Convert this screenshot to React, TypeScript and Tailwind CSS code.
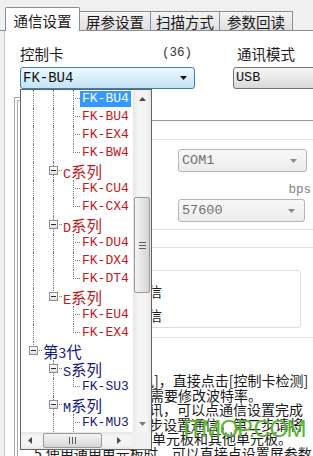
import React from "react";

type Seg = "pass" | "tee" | "ell" | "none";
interface RowDef {
  level: 0 | 1 | 2;
  segs: Seg[];
  text: string;
  tone: "red" | "blue";
  selected?: boolean;
}

const rows: RowDef[] = [
  { level: 2, segs: ["pass", "pass", "tee"], text: "FK-BU4", tone: "red", selected: true },
  { level: 2, segs: ["pass", "pass", "tee"], text: "FK-BU4", tone: "red" },
  { level: 2, segs: ["pass", "pass", "tee"], text: "FK-EX4", tone: "red" },
  { level: 2, segs: ["pass", "pass", "ell"], text: "FK-BW4", tone: "red" },
  { level: 1, segs: ["pass", "tee"], text: "C", tone: "red" },
  { level: 2, segs: ["pass", "pass", "tee"], text: "FK-CU4", tone: "red" },
  { level: 2, segs: ["pass", "pass", "ell"], text: "FK-CX4", tone: "red" },
  { level: 1, segs: ["pass", "tee"], text: "D", tone: "red" },
  { level: 2, segs: ["pass", "pass", "tee"], text: "FK-DU4", tone: "red" },
  { level: 2, segs: ["pass", "pass", "tee"], text: "FK-DX4", tone: "red" },
  { level: 2, segs: ["pass", "pass", "ell"], text: "FK-DT4", tone: "red" },
  { level: 1, segs: ["pass", "ell"], text: "E", tone: "red" },
  { level: 2, segs: ["pass", "none", "tee"], text: "FK-EU4", tone: "red" },
  { level: 2, segs: ["pass", "none", "ell"], text: "FK-EX4", tone: "red" },
  { level: 0, segs: ["ell"], text: "3", tone: "blue" },
  { level: 1, segs: ["none", "tee"], text: "S", tone: "blue" },
  { level: 2, segs: ["none", "pass", "ell"], text: "FK-SU3", tone: "blue" },
  { level: 1, segs: ["none", "tee"], text: "M", tone: "blue" },
  { level: 2, segs: ["none", "pass", "tee"], text: "FK-MU3", tone: "blue" },
];

const VLEFT = ["left-[12px]", "left-[32px]", "left-[52px]"];
const HLEFT = ["left-[18px]", "left-[38px]", "left-[54px]"];
const BOX = ["left-[8px]", "left-[28px]", "left-[48px]"];
const WCLS = ["w-[21px]", "w-[41px]", "w-[59px]"];

function Guides({ level, segs }: { level: 0 | 1 | 2; segs: Seg[] }) {
  return (
    <div className={`relative h-[18px] shrink-0 ${WCLS[level]}`}>
      {segs.map((s, i) => (
        <React.Fragment key={i}>
          {(s === "pass" || s === "tee") && (
            <div className={`absolute top-0 h-[18px] w-0 border-l border-dotted border-[#7c7c7c] ${VLEFT[i]}`} />
          )}
          {s === "ell" && (
            <div className={`absolute top-0 h-[9px] w-0 border-l border-dotted border-[#7c7c7c] ${VLEFT[i]}`} />
          )}
          {(s === "tee" || s === "ell") && i === level && (
            <div className={`absolute right-0 top-[8px] h-0 border-t border-dotted border-[#7c7c7c] ${HLEFT[i]}`} />
          )}
        </React.Fragment>
      ))}
      {level < 2 && (
        <div
          className={`absolute top-[4px] flex h-[9px] w-[9px] items-center justify-center border border-[#8e8e8e] bg-[linear-gradient(#ffffff,#dedede)] ${BOX[level]}`}
        >
          <div className="h-px w-[5px] bg-[#2a2a2a]" />
        </div>
      )}
    </div>
  );
}

const MONO = "font-['Liberation_Mono','Noto_Sans_CJK_SC',monospace]";

function Label({ row }: { row: RowDef }) {
  const tone = row.selected
    ? "bg-[#3399ff] text-white"
    : row.tone === "red"
    ? "text-[#c0181c]"
    : "text-[#16167c]";
  if (row.level === 2) {
    return (
      <span className={`h-[16px] px-[2px] leading-[16px] text-[13px] ${MONO} ${tone}`}>{row.text}</span>
    );
  }
  if (row.level === 1) {
    return (
      <span className={`flex h-[16px] items-baseline pl-[1px] leading-[16px] ${tone}`}>
        <span className={`text-[13.5px] ${MONO}`}>{row.text}</span>
        <span className="text-[15.5px]">系列</span>
      </span>
    );
  }
  return (
    <span className={`flex h-[16px] items-baseline pl-[1px] leading-[16px] ${tone}`}>
      <span className="text-[15.5px]">第</span>
      <span className="text-[14px]">{row.text}</span>
      <span className="text-[15.5px]">代</span>
    </span>
  );
}

function Tri({ dir, color }: { dir: "up" | "down" | "left" | "right"; color: string }) {
  const d =
    dir === "up"
      ? "M0 4 L3.5 0 L7 4 Z"
      : dir === "down"
      ? "M0 0 L7 0 L3.5 4 Z"
      : dir === "left"
      ? "M4 0 L4 7 L0 3.5 Z"
      : "M0 0 L4 3.5 L0 7 Z";
  const horiz = dir === "up" || dir === "down";
  return (
    <svg width={horiz ? 7 : 4} height={horiz ? 4 : 7} className="block">
      <path d={d} fill={color} />
    </svg>
  );
}

function Dropdown() {
  return (
    <div className="absolute left-[20px] top-[89px] z-20 flex h-[361px] w-[132px] flex-col border border-[#646464] bg-white">
      <div className="flex h-[342px]">
        <div className="flex w-[112px] flex-col overflow-hidden">
          {rows.map((r, i) => (
            <div key={i} className="flex h-[18px] shrink-0 items-center">
              <Guides level={r.level} segs={r.segs} />
              <Label row={r} />
            </div>
          ))}
        </div>
        <div className="flex w-[18px] flex-col bg-[linear-gradient(90deg,#e6e6e6,#f4f4f4_25%,#f4f4f4_75%,#e6e6e6)]">
          <div className="flex h-[17px] items-center justify-center">
            <Tri dir="up" color="#4a4a4a" />
          </div>
          <div className="flex-1">
            <div className="mx-[1px] mt-[90px] flex h-[96px] items-center justify-center rounded-[2px] border border-[#9a9a9a] bg-[linear-gradient(90deg,#f4f4f4,#e4e4e4_55%,#d4d4d4)]">
              <div className="flex w-[7px] flex-col gap-[2px]">
                <div className="h-px bg-[#5c5c5c]" />
                <div className="h-px bg-[#5c5c5c]" />
                <div className="h-px bg-[#5c5c5c]" />
              </div>
            </div>
          </div>
          <div className="flex h-[17px] items-center justify-center">
            <Tri dir="down" color="#7a7a7a" />
          </div>
        </div>
      </div>
      <div className="flex h-[17px]">
        <div className="flex w-[112px] items-center bg-[linear-gradient(#e6e6e6,#f4f4f4_25%,#f4f4f4_75%,#e6e6e6)]">
          <div className="flex w-[17px] items-center justify-center">
            <Tri dir="left" color="#4a4a4a" />
          </div>
          <div className="ml-[5px] flex h-[15px] w-[59px] items-center justify-center gap-[2px] rounded-[2px] border border-[#9a9a9a] bg-[linear-gradient(#f4f4f4,#e4e4e4_55%,#d4d4d4)]">
            <div className="h-[7px] w-px bg-[#5c5c5c]" />
            <div className="h-[7px] w-px bg-[#5c5c5c]" />
            <div className="h-[7px] w-px bg-[#5c5c5c]" />
          </div>
          <div className="flex-1" />
          <div className="mr-[6px] flex w-[17px] items-center justify-center">
            <Tri dir="right" color="#4a4a4a" />
          </div>
        </div>
        <div className="w-[18px] bg-[#f0f0f0]" />
      </div>
    </div>
  );
}

export default function App() {
  return (
    <div className="relative h-[456px] w-[313px] overflow-hidden bg-[#f0f0f0] font-['Noto_Sans_CJK_SC','Noto_Sans',sans-serif] text-[#1a1a1a]">
      {/* Tabs */}
      <div className="flex h-[31px] items-end border-b border-[#898c95] pl-[5px]">
        <div className="relative z-10 -mb-px flex h-[24px] w-[75px] shrink-0 justify-center rounded-t-[2px] border border-b-0 border-[#898c95] bg-white pt-[4px] text-[14.5px] leading-[17px]">
          通信设置
        </div>
        <div className="-ml-px flex h-[19px] w-[72px] shrink-0 justify-center border border-b-0 border-[#898c95] bg-[linear-gradient(#f4f4f4,#e0e0e0)] pt-[1px] text-[14.5px] leading-[17px]">
          屏参设置
        </div>
        <div className="-ml-px flex h-[19px] w-[70px] shrink-0 justify-center border border-b-0 border-[#898c95] bg-[linear-gradient(#f4f4f4,#e0e0e0)] pt-[1px] text-[14.5px] leading-[17px]">
          扫描方式
        </div>
        <div className="-ml-px flex h-[19px] w-[74px] shrink-0 justify-center border border-b-0 border-[#898c95] bg-[linear-gradient(#f4f4f4,#e0e0e0)] pt-[1px] text-[14.5px] leading-[17px]">
          参数回读
        </div>
      </div>

      {/* Panel */}
      <div className="ml-[4px] h-[425px] border-l border-[#c8c8c8] bg-white">
        <div className="flex pl-[15px] pt-[14px]">
          <div className="flex h-[17px] w-[175px] shrink-0 items-center justify-between pr-[3px]">
            <span className="text-[14.5px] leading-[17px]">控制卡</span>
            <span className={`text-[12.5px] leading-[17px] text-[#333] ${MONO}`}>(36)</span>
          </div>
          <div className="ml-[38px] shrink-0 pl-[4px] text-[14.5px] leading-[17px]">通讯模式</div>
        </div>
        <div className="mt-[5px] flex h-[22px] pl-[15px]">
          <div className="flex h-[22px] w-[175px] shrink-0 items-center justify-between rounded-[3px] border border-[#3c7fb1] bg-[linear-gradient(#eef8fd,#d8eefa_50%,#c2e3f6)] pl-[2px] pr-[7px]">
            <span className={`text-[14px] leading-[20px] text-[#111] ${MONO}`}>FK-BU4</span>
            <Tri dir="down" color="#111" />
          </div>
          <div className="ml-[38px] flex h-[22px] w-[100px] shrink-0 items-center rounded-[3px] border border-[#707070] bg-[linear-gradient(#f6f6f6,#e8e8e8_50%,#d8d8d8)] pl-[2px]">
            <span className={`text-[13.5px] leading-[20px] text-[#111] ${MONO}`}>USB</span>
          </div>
        </div>

        {/* Background region under the open list */}
        <div className="grid h-[367px] grid-cols-[minmax(0,1fr)]">
          {/* group box edges on the left */}
          <div className="col-start-1 row-start-1 ml-[9px] mt-[8px] w-[125px] border-l border-t border-[#a8a8a8]">
            <div className="ml-[2px] mt-[2px] h-full border-l border-t border-[#a8a8a8]" />
          </div>

          {/* right side controls */}
          <div className="col-start-1 row-start-1 ml-[115px] flex flex-col">
            <div className="h-[31px]" />
            <div className="h-[19px] border-t border-[#9a9a9a]" />
            <div className="border-t border-[#e3e3e3] pt-[9px]">
              <div className="ml-[58px] flex h-[23px] w-[129px] items-center justify-between rounded-[3px] border border-[#b2b6b9] bg-[linear-gradient(#f8f8f8,#ececec)] pl-[3px] pr-[9px]">
                <span className={`text-[13.5px] leading-[20px] text-[#707070] ${MONO}`}>COM1</span>
                <Tri dir="down" color="#8a8a8a" />
              </div>
              <div className="flex h-[27px] items-end justify-end pb-[1px] pr-[2px]">
                <span className={`text-[12.5px] leading-[15px] text-[#808080] ${MONO}`}>bps</span>
              </div>
              <div className="ml-[58px] flex h-[23px] w-[127px] items-center justify-between rounded-[3px] border border-[#b2b6b9] bg-[linear-gradient(#f8f8f8,#ececec)] pl-[3px] pr-[9px]">
                <span className={`text-[13.5px] leading-[20px] text-[#707070] ${MONO}`}>57600</span>
                <Tri dir="down" color="#8a8a8a" />
              </div>
            </div>
            <div className="mt-[7px] h-[18px] border-t border-[#e3e3e3]" />
            <div className="border-t border-[#e3e3e3]" />
            <div className="mr-[12px] mt-[22px] flex h-[58px] flex-col rounded-[3px] border border-[#d5dfe5] pl-[13px] pt-[8px]">
              <div className="h-[24px] text-[14px] leading-[24px]">通信</div>
              <div className="h-[24px] text-[14px] leading-[24px]">通信</div>
            </div>
            <div className="mt-[9px] border-t border-[#e3e3e3]" />
          </div>

          {/* help text */}
          <div className="col-start-1 row-start-1 mt-[284px] min-w-0 overflow-hidden whitespace-nowrap text-[14px] leading-[14.5px] text-[#1a1a1a]">
            <div className="pl-[135px]">讯]，直接点击[控制卡检测]</div>
            <div className="pl-[145px]">需要修改波特率。</div>
            <div className="pl-[144px]">讯，可以点通信设置完成</div>
            <div className="pl-[144px]">步设置通信，第二步请将</div>
            <div className="pl-[147px]">单元板和其他单元板。</div>
            <div className="pl-[29px]">5.使用通用单元板时，可以直接点设置屏参数</div>
          </div>
        </div>
      </div>

      <Dropdown />

      <div className="absolute left-[183px] top-[417px] z-30 font-['Liberation_Sans',Arial,sans-serif] text-[24px] leading-[24px] tracking-[-1.5px] text-[#5cb531]">
        ITMOP.COM
      </div>
    </div>
  );
}
